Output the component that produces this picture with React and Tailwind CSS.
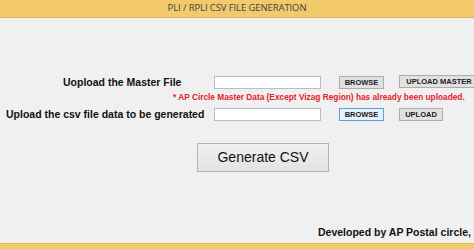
import React from 'react';

const arial = { fontFamily: '"Liberation Sans", Arial, sans-serif' };

const SmallButton = ({ children, focused, className = '' }) => (
  <button
    className={`h-[13px] border text-[7.5px] font-bold leading-none text-[#1a1a1a] ${
      focused ? 'border-[#5d9fe0] bg-[#e5f1fb]' : 'border-[#adadad] bg-[#e1e1e1]'
    } ${className}`}
    style={arial}
  >
    {children}
  </button>
);

const FileInput = () => (
  <div className="w-[107px] h-[13px] bg-white border border-[#b9bcc2] shrink-0" />
);

export default function App() {
  return (
    <div className="w-[474px] h-[249px] flex flex-col bg-[#f0f0f0] overflow-hidden" style={arial}>
      {/* Title bar */}
      <div className="h-[18px] shrink-0 bg-[#f2ca6b] border-b border-[#dcb15a] flex items-center justify-center">
        <span
          className="text-[9.5px] text-[#444] tracking-[-0.1px]"
          style={{ fontFamily: '"Open Sans", "Noto Sans", sans-serif' }}
        >
          PLI / RPLI CSV FILE GENERATION
        </span>
      </div>

      <div className="flex-1 flex flex-col">
        {/* Master file row */}
        <div className="flex items-center mt-[58px] h-[13px]">
          <span className="w-[214px] pl-[63px] text-[10.5px] font-bold text-[#111] whitespace-nowrap shrink-0">
            Uopload the Master File
          </span>
          <FileInput />
          <SmallButton className="ml-[18px] w-[45px] shrink-0">BROWSE</SmallButton>
          <SmallButton className="ml-[15px] w-[80px] shrink-0 -mt-[2px]">UPLOAD MASTER</SmallButton>
        </div>

        <div className="pl-[173px] mt-[2px] h-[12px] flex items-center text-[8.3px] font-bold text-[#e3212b] whitespace-nowrap">
          * AP Circle Master Data (Except Vizag Region) has already been uploaded.
        </div>

        {/* CSV data row */}
        <div className="flex items-center mt-[5px] h-[13px]">
          <span className="w-[214px] pl-[6px] text-[10.5px] font-bold text-[#111] whitespace-nowrap shrink-0">
            Upload the csv file data to be generated
          </span>
          <FileInput />
          <SmallButton focused className="ml-[18px] w-[45px] shrink-0">BROWSE</SmallButton>
          <SmallButton className="ml-[15px] w-[44px] shrink-0">UPLOAD</SmallButton>
        </div>

        <div className="pl-[197px] mt-[22px]">
          <button className="w-[132px] h-[29px] border border-[#b4b4b4] bg-gradient-to-b from-[#f0f0f0] to-[#e3e3e3] text-[14px] text-[#111]">
            Generate CSV
          </button>
        </div>

        <div className="mt-auto mb-[2px] pl-[318px] text-[10.5px] font-bold text-[#111] whitespace-nowrap">
          Developed by AP Postal circle, Hyderabad
        </div>
      </div>

      <div className="h-[6px] shrink-0 bg-[#f2ca6b] border-t border-[#e2b85c]" />
    </div>
  );
}
